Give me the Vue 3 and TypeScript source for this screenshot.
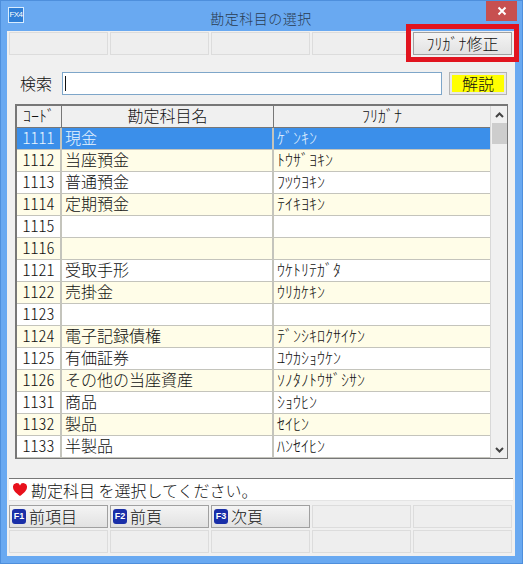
<script setup lang="ts">
const topCells = ['', '', '', '']
const rows: [string, string, string][] = [
  ['1111', '現金', 'ｹﾞﾝｷﾝ'],
  ['1112', '当座預金', 'ﾄｳｻﾞﾖｷﾝ'],
  ['1113', '普通預金', 'ﾌﾂｳﾖｷﾝ'],
  ['1114', '定期預金', 'ﾃｲｷﾖｷﾝ'],
  ['1115', '', ''],
  ['1116', '', ''],
  ['1121', '受取手形', 'ｳｹﾄﾘﾃｶﾞﾀ'],
  ['1122', '売掛金', 'ｳﾘｶｹｷﾝ'],
  ['1123', '', ''],
  ['1124', '電子記録債権', 'ﾃﾞﾝｼｷﾛｸｻｲｹﾝ'],
  ['1125', '有価証券', 'ﾕｳｶｼｮｳｹﾝ'],
  ['1126', 'その他の当座資産', 'ｿﾉﾀﾉﾄｳｻﾞｼｻﾝ'],
  ['1131', '商品', 'ｼｮｳﾋﾝ'],
  ['1132', '製品', 'ｾｲﾋﾝ'],
  ['1133', '半製品', 'ﾊﾝｾｲﾋﾝ'],
]
const fkeys = [
  { key: 'F1', label: '前項目' },
  { key: 'F2', label: '前頁' },
  { key: 'F3', label: '次頁' },
  { key: '', label: '' },
  { key: '', label: '' },
]
</script>

<template>
  <div class="window">
    <header class="titlebar">
      <span class="appicon">FX4</span>
      <span class="title">勘定科目の選択</span>
      <span class="close">
        <svg width="10" height="10" viewBox="0 0 10 10"><path d="M1.500 1.500l7 7M8.500 1.500l-7 7" stroke="#fff" stroke-width="2" /></svg>
      </span>
    </header>
    <main class="body">
      <div class="btnrow">
        <div v-for="(c, i) in topCells" :key="i" class="cell off">{{ c }}</div>
        <div class="cell on kana">ﾌﾘｶﾞﾅ修正</div>
      </div>
      <div class="search">
        <label class="searchlabel">検索</label>
        <div class="input"><span class="caret"></span></div>
        <div class="help">解説</div>
      </div>
      <div class="tablewrap">
        <div class="table">
          <div class="row head">
            <div class="c1 kana">ｺｰﾄﾞ</div>
            <div class="c2 headname">勘定科目名</div>
            <div class="c3 kana">ﾌﾘｶﾞﾅ</div>
          </div>
          <div
            v-for="(r, i) in rows"
            :key="r[0]"
            class="row"
            :class="{ sel: i === 0, alt: i % 2 === 1 }"
          >
            <div class="c1 code">{{ r[0] }}</div>
            <div class="c2">{{ r[1] }}</div>
            <div class="c3">{{ r[2] }}</div>
          </div>
        </div>
        <div class="scroll">
          <svg class="arrow" width="9" height="6" viewBox="0 0 9 6"><path d="M1 5l3.500-3.500L8 5" fill="none" stroke="#444" stroke-width="2" /></svg>
          <div class="thumb"></div>
          <svg class="arrow" width="9" height="6" viewBox="0 0 9 6"><path d="M1 1l3.500 3.500L8 1" fill="none" stroke="#444" stroke-width="2" /></svg>
        </div>
      </div>
      <div class="message">
        <svg class="heart" width="14" height="13" viewBox="0 0 14 13"><path d="M7 13C3 10 0 7.500 0 4a3.600 3.600 0 0 1 7-1.400A3.600 3.600 0 0 1 14 4c0 3.500-3 6-7 9z" fill="#e8101c" /></svg>
        <span>勘定科目 を選択してください。</span>
      </div>
      <div class="btnrow fkeys">
        <div v-for="(f, i) in fkeys" :key="i" class="cell" :class="f.key ? 'on fk' : 'off'">
          <span v-if="f.key" class="badge">{{ f.key }}</span>{{ f.label }}
        </div>
      </div>
      <div class="btnrow last">
        <div v-for="n in 5" :key="n" class="cell off"></div>
      </div>
    </main>
    <div class="redbox"></div>
  </div>
</template>

<style scoped>
.window {
  position: relative;
  width: 523px;
  height: 564px;
  box-sizing: border-box;
  background: #69a9f1;
  border: 1px solid #4e8fdc;
  padding: 0 7px 7px 6px;
  font-family: "Noto Sans CJK JP", "Liberation Sans", sans-serif;
  font-weight: 300;
  color: #111;
  overflow: hidden;
}
.titlebar {
  height: 30px;
  display: flex;
  align-items: center;
  justify-content: center;
  position: relative;
}
.appicon {
  position: absolute;
  left: 1px;
  top: 6px;
  width: 14px;
  height: 14px;
  border: 1px solid #d8ecff;
  background: #2f7fd6;
  color: #fff;
  font: 8px/14px "Liberation Sans", sans-serif;
  text-align: center;
  letter-spacing: -0.6px;
}
.title {
  font-size: 14px;
  letter-spacing: 0.5px;
  color: #2a3c52;
  margin-top: 3px;
}
.close {
  position: absolute;
  right: -2px;
  top: -1px;
  width: 31px;
  height: 21px;
  background: #c75050;
  display: flex;
  align-items: center;
  justify-content: center;
}
.body {
  height: 525px;
  box-sizing: border-box;
  background: #f0f0f0;
  padding: 1px 3px 0 2px;
}
.btnrow {
  display: flex;
  gap: 2px;
}
.cell {
  width: 99px;
  height: 23px;
  box-sizing: border-box;
  font-size: 16px;
  line-height: 21px;
  white-space: nowrap;
}
.off {
  border: 1px solid #dcdcdc;
  background: #eeeeee;
}
.on {
  border: 1px solid #a0a0a0;
  background: linear-gradient(#f4f4f4, #e2e2e2);
}
.kana {
  text-align: center;
}
.search {
  display: flex;
  align-items: center;
  height: 23px;
  margin: 17px 0 9px;
}
.searchlabel {
  font-size: 16px;
  line-height: 21px;
  width: 40px;
  margin-left: 11px;
  margin-top: -1px;
  margin-right: 2px;
}
.input {
  width: 380px;
  height: 23px;
  box-sizing: border-box;
  background: #fff;
  border: 1px solid #7ea6c9;
  display: flex;
  align-items: center;
  padding-left: 2px;
}
.caret {
  width: 1px;
  height: 15px;
  background: #111;
}
.help {
  width: 58px;
  height: 23px;
  margin-left: 7px;
  box-sizing: border-box;
  border: 1px solid #b4b4b4;
  box-shadow: inset 0 0 0 2px #e8e8e8;
  background: #ffff00;
  text-align: center;
  font-size: 16px;
  line-height: 21px;
}
.tablewrap {
  display: flex;
  margin-left: 6px;
  width: 493px;
  height: 355px;
  box-sizing: border-box;
  border: 1px solid #777;
  border-top: 2px solid #777;
  border-left-width: 2px;
  background: #fff;
}
.table {
  width: 473px;
  flex: none;
}
.row {
  display: flex;
  height: 22px;
  box-sizing: border-box;
  border-bottom: 1px solid #c4c4bc;
  background: #fff;
  font-size: 16px;
  line-height: 19px;
}
.row.alt {
  background: #fffde8;
}
.row.sel {
  background: #3b8fea;
  color: #e8f4ff;
}
.row.head {
  background: #f0f0f0;
  border-bottom: 1px solid #777;
  color: #111;
}
.c1, .c2, .c3 {
  box-sizing: border-box;
  white-space: nowrap;
}
.c1 {
  width: 45px;
  border-right: 2px solid #c4c4bc;
}
.c2 {
  width: 212px;
  padding-left: 3px;
  border-right: 2px solid #c4c4bc;
}
.c3 {
  flex: 1;
  padding-left: 3px;
}
.head .c1, .head .c2 {
  border-right: 1px solid #777;
}
.head .c2 {
  text-align: center;
  padding: 0;
}
.head .c3 {
  padding: 0;
}
.code {
  text-align: center;
  font-feature-settings: "hwid";
}
.scroll {
  flex: 1;
  background: #f0f0f0;
  border-left: 1px solid #d8d8d8;
  display: flex;
  flex-direction: column;
  align-items: center;
}
.arrow {
  flex: none;
  margin: 6px 0 5px;
}
.thumb {
  width: 15px;
  height: 21px;
  background: #cdcdcd;
  margin-bottom: auto;
}
.message {
  display: flex;
  align-items: center;
  width: 504px;
  height: 23px;
  margin-top: 19px;
  box-sizing: border-box;
  background: #fff;
  border-top: 1px solid #777;
  border-bottom: 1px solid #e4e4e4;
  padding-left: 4px;
  font-size: 16px;
}
.heart {
  margin-right: 4px;
}
.fkeys {
  margin-top: 4px;
}
.last {
  margin-top: 2px;
}
.fk {
  padding-left: 2px;
  display: flex;
  align-items: center;
  gap: 3px;
}
.badge {
  width: 14px;
  height: 15px;
  border-radius: 3px;
  background: #1a2fa8;
  color: #fff;
  font: bold 9px/15px "Liberation Sans", sans-serif;
  text-align: center;
  flex: none;
}
.redbox {
  position: absolute;
  left: 405px;
  top: 23px;
  width: 113px;
  height: 38px;
  box-sizing: border-box;
  border: 5px solid #e1141f;
}
</style>
